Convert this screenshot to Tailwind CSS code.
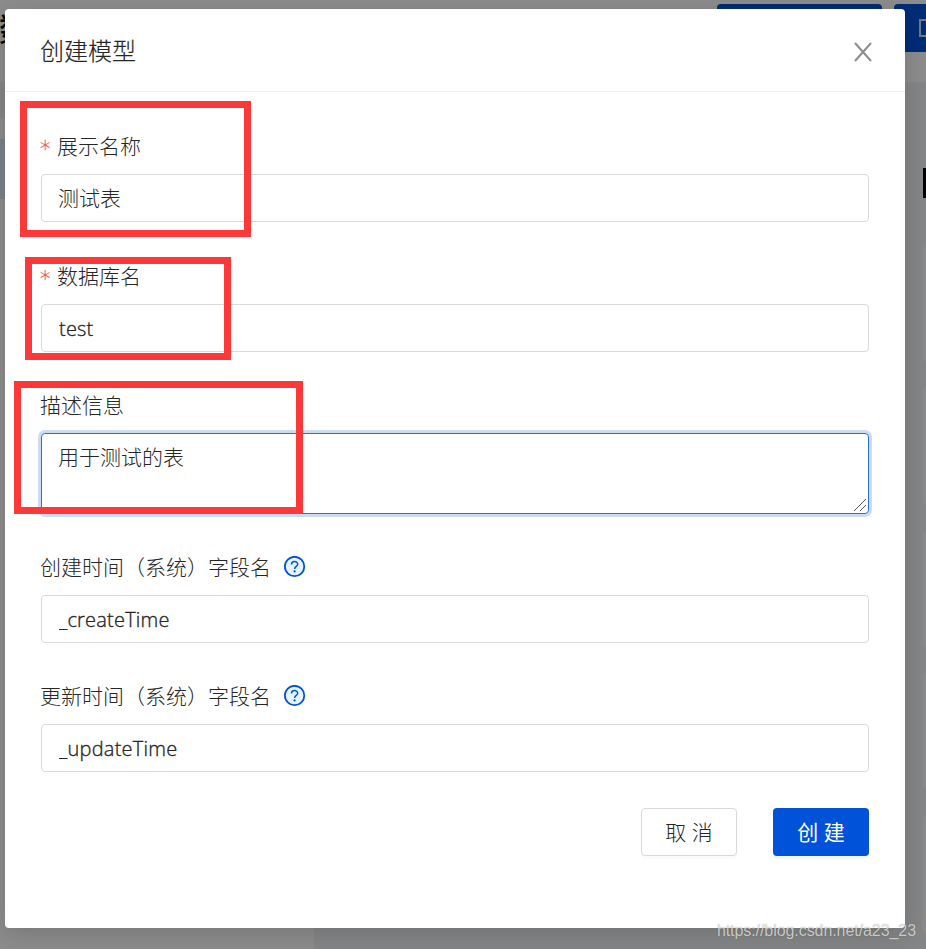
<!DOCTYPE html>
<html lang="zh-CN">
<head>
    <meta charset="UTF-8" />
    <meta name="viewport" content="width=device-width, initial-scale=1.0" />
    <title>创建模型</title>

    <!-- Tailwind CSS -->
    <script src="https://cdn.jsdelivr.net/npm/@tailwindcss/browser@4"></script>
</head>

<body class="relative h-[949px] w-[926px] overflow-hidden bg-[#f0f2f5] font-['Open_Sans','Noto_Sans_CJK_SC',sans-serif] text-[#262626]">
    <!-- Page behind the dialog -->
    <div class="flex h-full flex-col overflow-hidden">
        <header class="flex h-[82px] shrink-0 items-start justify-between bg-white pt-1">
            <h2 class="-ml-px mt-1.5 text-[32px] leading-[38px] font-medium text-black">数</h2>
            <div class="-mr-[133px] flex gap-3">
                <div class="h-12 w-[165px] rounded bg-[#0052d9]"></div>
                <div class="flex h-12 w-[165px] items-center rounded bg-[#0052d9] pl-[25px]">
                    <span class="size-[18px] border-2 border-white/80"></span>
                </div>
            </div>
        </header>
        <div class="flex flex-1">
            <aside class="w-[314px] bg-white">
                <div class="h-9 bg-[#f0f2f5]"></div>
                <div class="mt-[21px] h-[60px] bg-[#dcedfc]"></div>
            </aside>
            <main class="flex flex-1 flex-col items-end overflow-hidden">
                <div class="mt-[86px] h-[30px] w-[3px] bg-black"></div>
                <div class="mt-[46px] flex flex-col gap-[26px]">
                    <div class="h-[117px] w-1 rounded-l bg-[#fafafa]"></div>
                    <div class="h-[117px] w-1 rounded-l bg-[#fafafa]"></div>
                    <div class="h-[117px] w-1 rounded-l bg-[#fafafa]"></div>
                    <div class="h-[117px] w-1 rounded-l bg-[#fafafa]"></div>
                    <div class="h-[117px] w-1 rounded-l bg-[#fafafa]"></div>
                </div>
            </main>
        </div>
    </div>

    <!-- Dialog -->
    <div class="absolute inset-0 bg-black/45 pt-[9px] pl-[5px]">
        <div class="h-[919px] w-[900px] rounded bg-white shadow-[0_6px_24px_rgba(0,0,0,0.15)]">
            <div class="flex h-[83px] items-center justify-between border-b border-[#f0f0f0] pt-0.5 pr-8 pl-[35px]">
                <h1 class="text-2xl font-light [-webkit-text-stroke:0.2px_#262626]">创建模型</h1>
                <svg class="mt-0.5 size-5" viewBox="0 0 20 20" fill="none" stroke="#8c8c8c" stroke-width="2">
                    <path d="M2 1 18 19M18 1 2 19" />
                </svg>
            </div>

            <form class="px-9 pt-[38px] text-[21px] font-light">
                <label class="-ml-px flex h-[33px] items-center"><span class="mr-[7px] w-2.5 pt-1.5 font-['DejaVu_Sans'] text-[#ff4d4f] [-webkit-text-stroke:0.3px_#ff4d4f]">*</span>展示名称</label>
                <input type="text" value="测试表" class="mt-[11px] block h-12 w-full rounded border border-[#d9d9d9] px-4 pb-0.5" />

                <label class="-ml-px mt-[38px] flex h-[33px] items-center"><span class="mr-[7px] w-2.5 pt-1.5 font-['DejaVu_Sans'] text-[#ff4d4f] [-webkit-text-stroke:0.3px_#ff4d4f]">*</span>数据库名</label>
                <input type="text" value="test" class="mt-[11px] block h-12 w-full rounded border border-[#d9d9d9] px-[17px] text-xl tracking-[0.2px] [-webkit-text-stroke:0.35px_#262626]" />

                <label class="-ml-px mt-[37px] flex h-[33px] items-center">描述信息</label>
                <div class="relative mt-[11px]">
                    <textarea class="block h-[81px] w-full resize-none rounded border border-[#2670e0] px-4 py-[7px] leading-[33px] shadow-[0_0_0_3px_rgba(0,82,217,0.2)] outline-none">用于测试的表</textarea>
                    <svg class="absolute right-[3px] bottom-[3px] size-3" viewBox="0 0 12 12" stroke="#555" stroke-width="1">
                        <path d="M0 12 12 0M6 12 12 6" />
                    </svg>
                </div>

                <label class="-ml-px mt-[37px] flex h-[33px] items-center">创建时间（系统）字段名
                    <svg class="mb-0.5 ml-[13px] size-[22px]" viewBox="0 0 22 22" fill="none" stroke="#0052d9" stroke-width="1.8">
                        <circle cx="10.6" cy="10.5" r="9.7" fill="#e6f4ff" />
                        <path d="M7.5 8.5C7.5 4.6 13.7 4.6 13.7 8.3 13.7 10.4 10.6 10.3 10.6 12.9" stroke-width="1.5" />
                        <circle cx="10.6" cy="15.4" r="1.1" fill="#0052d9" stroke="none" />
                    </svg>
                </label>
                <input type="text" value="_createTime" class="mt-[11px] block h-12 w-full rounded border border-[#d9d9d9] px-[17px] text-xl tracking-[0.2px] [-webkit-text-stroke:0.35px_#262626]" />

                <label class="-ml-px mt-[37px] flex h-[33px] items-center">更新时间（系统）字段名
                    <svg class="mb-0.5 ml-[13px] size-[22px]" viewBox="0 0 22 22" fill="none" stroke="#0052d9" stroke-width="1.8">
                        <circle cx="10.6" cy="10.5" r="9.7" fill="#e6f4ff" />
                        <path d="M7.5 8.5C7.5 4.6 13.7 4.6 13.7 8.3 13.7 10.4 10.6 10.3 10.6 12.9" stroke-width="1.5" />
                        <circle cx="10.6" cy="15.4" r="1.1" fill="#0052d9" stroke="none" />
                    </svg>
                </label>
                <input type="text" value="_updateTime" class="mt-[11px] block h-12 w-full rounded border border-[#d9d9d9] px-[17px] text-xl tracking-[0.25px] [-webkit-text-stroke:0.35px_#262626]" />

                <div class="mt-9 flex justify-end gap-9">
                    <button type="button" class="h-12 w-24 rounded border border-[#d9d9d9] bg-white pt-0.5 shadow-[0_3px_0_rgba(0,0,0,0.015)]">取 消</button>
                    <button type="button" class="h-12 w-24 rounded bg-[#0052d9] pt-0.5 font-normal text-white shadow-[0_3px_0_rgba(0,0,0,0.04)]">创 建</button>
                </div>
            </form>
        </div>
    </div>

    <!-- Highlight frames -->
    <div class="absolute top-[101px] left-5 h-[136px] w-[231px] border-7 border-[#fc3838]"></div>
    <div class="absolute top-[257px] left-[25px] h-[103px] w-[206px] border-7 border-[#fc3838]"></div>
    <div class="absolute top-[381px] left-3.5 h-[133px] w-[289px] border-7 border-[#fc3838]"></div>

    <p class="absolute right-[10px] bottom-2 font-['Liberation_Sans',sans-serif] text-base leading-5 tracking-[-0.07px] text-white/70 [text-shadow:0_0_1px_rgba(0,0,0,0.4)]">https://blog.csdn.net/a23_23</p>
</body>
</html>
